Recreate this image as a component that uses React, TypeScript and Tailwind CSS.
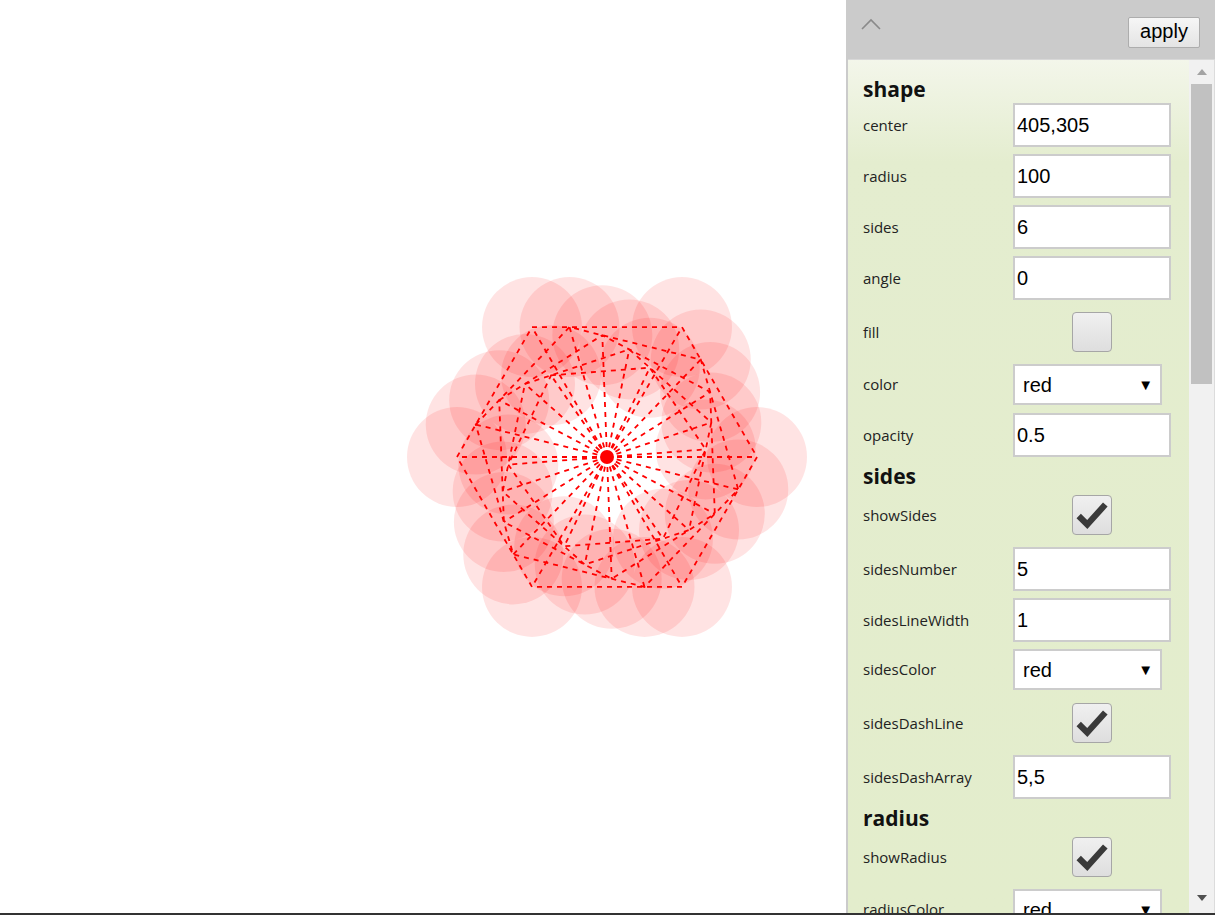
import React from 'react';

type Pt = [number, number];

const CX = 607;
const CY = 457;

// nested hexagons: each one sits on the sides of the previous one
function buildPolygons(sides: number, radius: number, count: number, t: number): Pt[][] {
  const first: Pt[] = [];
  for (let i = 0; i < sides; i++) {
    const a = Math.PI + (i * 2 * Math.PI) / sides;
    first.push([CX + radius * Math.cos(a), CY + radius * Math.sin(a)]);
  }
  const list: Pt[][] = [first];
  for (let k = 1; k < count; k++) {
    const prev = list[k - 1];
    const next: Pt[] = prev.map((p, i) => {
      const q = prev[(i + 1) % prev.length];
      return [p[0] + (q[0] - p[0]) * t, p[1] + (q[1] - p[1]) * t];
    });
    list.push(next);
  }
  return list;
}

const polygons = buildPolygons(6, 150, 5, 0.25);
const vertices = polygons.flat();

function Figure() {
  return (
    <svg width="846" height="913" className="block">
      {vertices.map((p, i) => (
        <circle key={'c' + i} cx={p[0]} cy={p[1]} r={50} fill="#ff0000" fillOpacity={0.11} />
      ))}
      {vertices.map((p, i) => (
        <line
          key={'r' + i}
          x1={CX}
          y1={CY}
          x2={p[0]}
          y2={p[1]}
          stroke="#ff0000"
          strokeWidth={1.8}
          strokeDasharray="5,5"
        />
      ))}
      {polygons.map((poly, i) => (
        <polygon
          key={'p' + i}
          points={poly.map((p) => p.join(',')).join(' ')}
          fill="none"
          stroke="#ff0000"
          strokeWidth={1.8}
          strokeDasharray="5,5"
        />
      ))}
      <circle cx={CX} cy={CY} r={7} fill="#ff0000" />
    </svg>
  );
}

function Heading({ text }: { text: string }) {
  return (
    <div className="h-[26px] shrink-0 flex items-center text-[21px] font-bold text-[#111] font-['Open_Sans',sans-serif]">
      {text}
    </div>
  );
}

function Label({ text }: { text: string }) {
  return <div className="w-[150px] shrink-0 text-[15px] text-[#222] font-['Open_Sans',sans-serif]">{text}</div>;
}

function InputRow({ label, value }: { label: string; value: string }) {
  return (
    <div className="flex shrink-0 items-center h-[44px] mb-[7px]">
      <Label text={label} />
      <div className="w-[158px] h-[44px] border-2 border-[#cccccc] bg-white flex items-center pl-[2px] text-[20px] text-black font-['Liberation_Sans',Arial,sans-serif]">
        {value}
      </div>
    </div>
  );
}

function SelectRow({ label, value }: { label: string; value: string }) {
  return (
    <div className="flex shrink-0 items-center h-[41px] mb-[8px]">
      <Label text={label} />
      <div className="w-[149px] h-[41px] border-2 border-[#cccccc] bg-white flex items-center justify-between pl-[8px] pr-[7px] text-[20px] text-black font-['Liberation_Sans',Arial,sans-serif]">
        <span>{value}</span>
        <span className="text-[15px] leading-none">▼</span>
      </div>
    </div>
  );
}

function CheckRow({ label, checked }: { label: string; checked: boolean }) {
  return (
    <div className="flex shrink-0 items-center h-[40px] mt-[5px] mb-[12px]">
      <Label text={label} />
      <div className="w-[158px] flex justify-center">
        <div className="w-[40px] h-[40px] rounded-[4px] border border-[#a6a6a6] bg-gradient-to-b from-[#f0f0f0] to-[#dedede] flex items-center justify-center">
          {checked && (
            <svg width="40" height="40" viewBox="0 0 40 40">
              <polyline points="6,21 15,30 34,9" fill="none" stroke="#3a3a3a" strokeWidth={6.5} strokeLinejoin="miter" />
            </svg>
          )}
        </div>
      </div>
    </div>
  );
}

function Scrollbar() {
  return (
    <div className="w-[26px] bg-[#f1f1f1] flex flex-col items-center border-r border-[#dcdcdc]">
      <div className="h-[24px] flex items-center justify-center">
        <svg width="10" height="6" viewBox="0 0 10 6">
          <polygon points="5,0 10,6 0,6" fill="#a3a3a3" />
        </svg>
      </div>
      <div className="w-[21px] h-[300px] bg-[#c1c1c1]" />
      <div className="flex-1" />
      <div className="h-[24px] flex items-center justify-center pb-[6px]">
        <svg width="10" height="6" viewBox="0 0 10 6">
          <polygon points="0,0 10,0 5,6" fill="#505050" />
        </svg>
      </div>
    </div>
  );
}

export default function App() {
  return (
    <div className="w-[1215px] h-[915px] flex bg-white overflow-hidden border-b-2 border-[#333333]">
      {/* drawing area */}
      <div className="w-[846px] shrink-0">
        <Figure />
      </div>

      {/* settings panel */}
      <div className="flex-1 flex flex-col bg-[#cbcbcb] pl-[2px]">
        <div className="h-[60px] shrink-0 flex items-center justify-between pl-[12px] pr-[15px] border-b border-[#d8d8d8]">
          <svg width="22" height="14" viewBox="0 0 22 14" className="-mt-[12px]">
            <polyline points="2,12 11,3 20,12" fill="none" stroke="#8a8a8a" strokeWidth={1.6} />
          </svg>
          <button className="w-[72px] h-[31px] mt-[5px] border border-[#adadad] rounded-[2px] bg-gradient-to-b from-[#f6f6f6] to-[#e4e4e4] text-[20px] text-black font-['Liberation_Sans',Arial,sans-serif] leading-none pb-[2px]">
            apply
          </button>
        </div>
        <div className="flex-1 min-h-0 flex">
          <div className="flex-1 flex flex-col overflow-hidden pl-[15px] pt-[17px] bg-gradient-to-b from-[#f3f6ea] via-[#e4edcf] via-[12%] to-[#e3edcc]">
            <Heading text="shape" />
            <InputRow label="center" value="405,305" />
            <InputRow label="radius" value="100" />
            <InputRow label="sides" value="6" />
            <InputRow label="angle" value="0" />
            <CheckRow label="fill" checked={false} />
            <SelectRow label="color" value="red" />
            <InputRow label="opacity" value="0.5" />
            <Heading text="sides" />
            <CheckRow label="showSides" checked={true} />
            <InputRow label="sidesNumber" value="5" />
            <InputRow label="sidesLineWidth" value="1" />
            <SelectRow label="sidesColor" value="red" />
            <CheckRow label="sidesDashLine" checked={true} />
            <InputRow label="sidesDashArray" value="5,5" />
            <Heading text="radius" />
            <CheckRow label="showRadius" checked={true} />
            <SelectRow label="radiusColor" value="red" />
          </div>
          <Scrollbar />
        </div>
      </div>
    </div>
  );
}
